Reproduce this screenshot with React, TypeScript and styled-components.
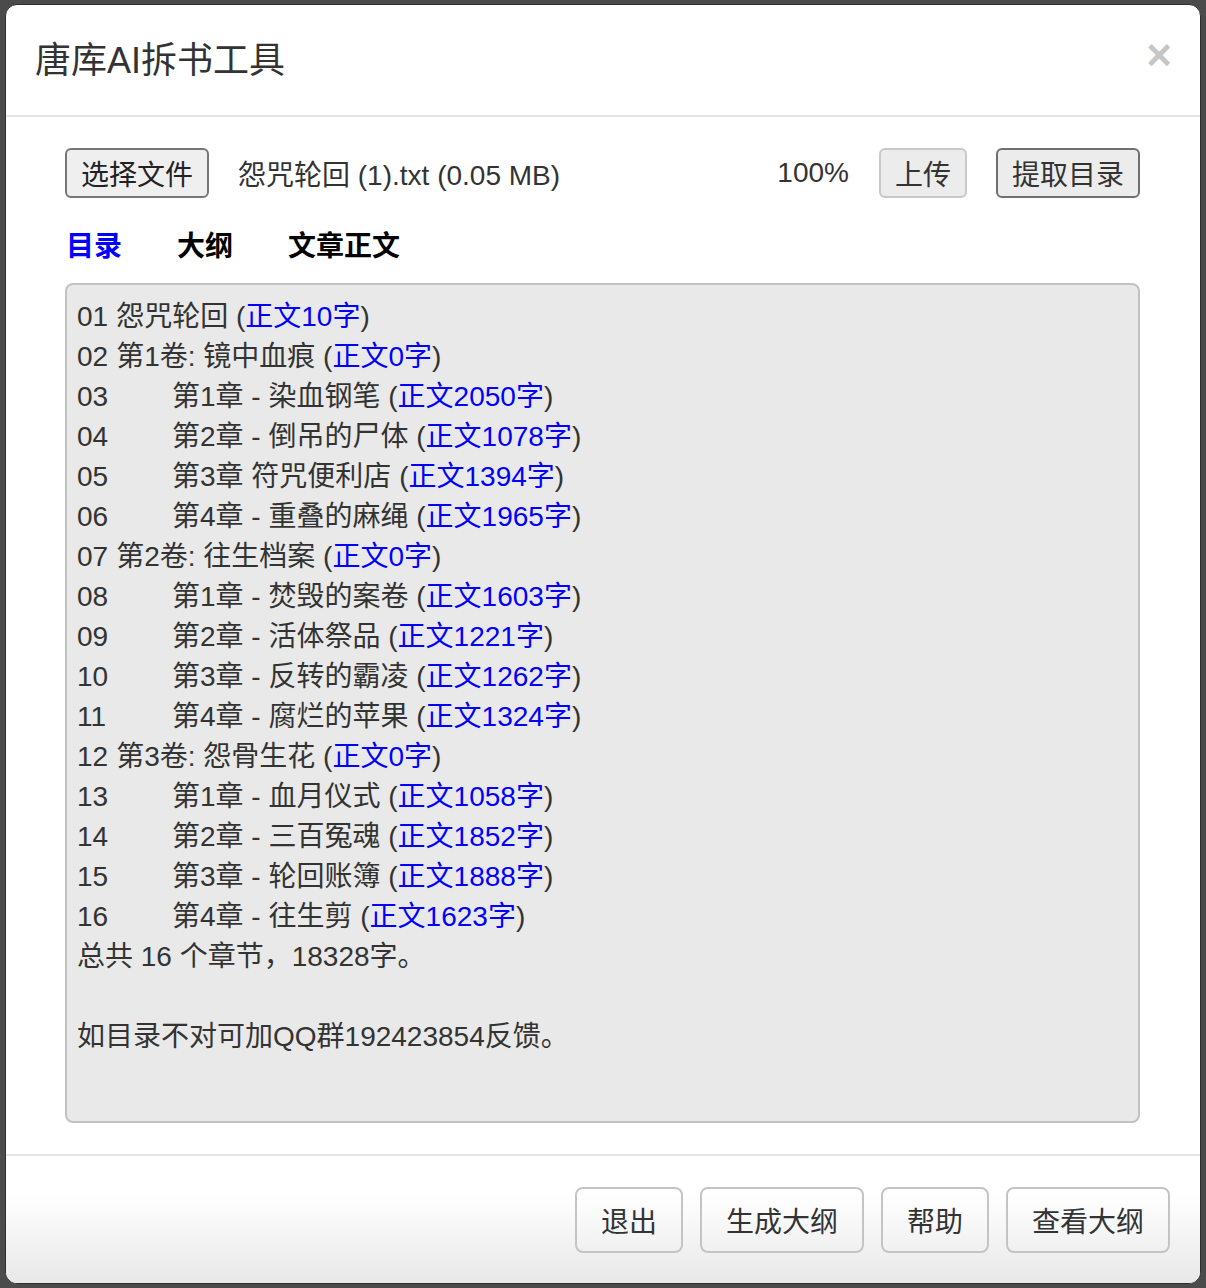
import React from "react";
import styled, { createGlobalStyle } from "styled-components";

const GlobalStyle = createGlobalStyle`
  html, body {
    margin: 0;
    padding: 0;
    background: #4b4b4b;
  }
  body {
    font-family: "Liberation Sans", "Noto Sans CJK SC", sans-serif;
    color: #333;
  }
  * {
    box-sizing: border-box;
  }
`;

type Entry = { no: string; title: string; count: number; indent?: boolean };

const entries: Entry[] = [
  { no: "01", title: "怨咒轮回", count: 10 },
  { no: "02", title: "第1卷: 镜中血痕", count: 0 },
  { no: "03", title: "第1章 - 染血钢笔", count: 2050, indent: true },
  { no: "04", title: "第2章 - 倒吊的尸体", count: 1078, indent: true },
  { no: "05", title: "第3章 符咒便利店", count: 1394, indent: true },
  { no: "06", title: "第4章 - 重叠的麻绳", count: 1965, indent: true },
  { no: "07", title: "第2卷: 往生档案", count: 0 },
  { no: "08", title: "第1章 - 焚毁的案卷", count: 1603, indent: true },
  { no: "09", title: "第2章 - 活体祭品", count: 1221, indent: true },
  { no: "10", title: "第3章 - 反转的霸凌", count: 1262, indent: true },
  { no: "11", title: "第4章 - 腐烂的苹果", count: 1324, indent: true },
  { no: "12", title: "第3卷: 怨骨生花", count: 0 },
  { no: "13", title: "第1章 - 血月仪式", count: 1058, indent: true },
  { no: "14", title: "第2章 - 三百冤魂", count: 1852, indent: true },
  { no: "15", title: "第3章 - 轮回账簿", count: 1888, indent: true },
  { no: "16", title: "第4章 - 往生剪", count: 1623, indent: true },
];

const tabs = [
  { label: "目录", active: true },
  { label: "大纲", active: false },
  { label: "文章正文", active: false },
];

const footerButtons = ["退出", "生成大纲", "帮助", "查看大纲"];

const App = (): JSX.Element => {
  return (
    <>
      <GlobalStyle />
      <Backdrop>
        <Modal>
          <Header>
            <Title>唐库AI拆书工具</Title>
            <Close type="button" aria-label="Close">
              ×
            </Close>
          </Header>
          <Body>
            <UploadRow>
              <FileButton type="button">选择文件</FileButton>
              <FileName>怨咒轮回 (1).txt (0.05 MB)</FileName>
              <Percent>100%</Percent>
              <ActionButton type="button" $muted>
                上传
              </ActionButton>
              <ActionButton type="button">提取目录</ActionButton>
            </UploadRow>
            <Tabs>
              {tabs.map((t) => (
                <Tab key={t.label} $active={t.active}>
                  {t.label}
                </Tab>
              ))}
            </Tabs>
            <Catalog>
              {entries.map((e) => (
                <Line key={e.no}>
                  <Num $indent={e.indent}>{e.no}</Num>
                  {e.title} (<Count>正文{e.count}字</Count>)
                </Line>
              ))}
              <Line>总共 16 个章节，18328字。</Line>
              <Line>&nbsp;</Line>
              <Line>如目录不对可加QQ群192423854反馈。</Line>
            </Catalog>
          </Body>
          <Footer>
            {footerButtons.map((label) => (
              <FooterButton key={label} type="button">
                {label}
              </FooterButton>
            ))}
          </Footer>
        </Modal>
      </Backdrop>
    </>
  );
};

const Backdrop = styled.div`
  padding: 4px 5px;
  min-height: 1288px;
`;

const Modal = styled.div`
  background: #fff;
  border: 1px solid #2e2e2e;
  border-radius: 12px;
  overflow: hidden;
  display: flex;
  flex-direction: column;
  height: 1280px;
`;

const Header = styled.div`
  display: flex;
  align-items: center;
  justify-content: space-between;
  padding: 31px 30px 29px 29px;
  border-bottom: 2px solid #e5e5e5;
`;

const Title = styled.h4`
  margin: 0;
  font-size: 36px;
  line-height: 50px;
  font-weight: 400;
  color: #333;
`;

const Close = styled.button`
  border: 0;
  background: transparent;
  padding: 0;
  margin: -12px -2px 0 0;
  font-family: "Liberation Sans", sans-serif;
  font-size: 44px;
  line-height: 1;
  font-weight: 700;
  color: #000;
  opacity: 0.22;
  cursor: pointer;
`;

const Body = styled.div`
  flex: 1;
  padding: 31px 60px 31px 59px;
  display: flex;
  flex-direction: column;
`;

const UploadRow = styled.div`
  display: flex;
  align-items: center;
  gap: 29px;
  height: 50px;
  margin-bottom: 20px;
`;

const FileButton = styled.button`
  height: 50px;
  padding: 0 14px;
  font-family: inherit;
  font-size: 28px;
  color: #222;
  background: #efefef;
  border: 2px solid #767676;
  border-radius: 6px;
`;

const FileName = styled.span`
  flex: 1;
  font-size: 28px;
  color: #333;
`;

const Percent = styled.span`
  font-size: 28px;
  color: #333;
  margin-right: 1px;
`;

const ActionButton = styled.button<{ $muted?: boolean }>`
  height: 50px;
  padding: 0 14px;
  font-family: inherit;
  font-size: 28px;
  color: #333;
  background: #ececec;
  border: 2px solid ${({ $muted }) => ($muted ? "#c9c9c9" : "#6f6f6f")};
  border-radius: 6px;
`;

const Tabs = styled.div`
  display: flex;
  gap: 55px;
  height: 52px;
  align-items: center;
  margin-bottom: 13px;
  padding-left: 1px;
`;

const Tab = styled.span<{ $active?: boolean }>`
  font-size: 28px;
  font-weight: 700;
  color: ${({ $active }) => ($active ? "#0000ff" : "#000")};
  cursor: pointer;
`;

const Catalog = styled.div`
  flex: 1;
  background: #e9e9e9;
  border: 2px solid #c2c2c2;
  border-radius: 8px;
  padding: 12px 10px 10px;
`;

const Line = styled.div`
  font-size: 28px;
  line-height: 40px;
  color: #333;
  white-space: nowrap;
`;

const Num = styled.span<{ $indent?: boolean }>`
  display: inline-block;
  width: ${({ $indent }) => ($indent ? "95px" : "auto")};
  margin-right: ${({ $indent }) => ($indent ? "0" : "8px")};
`;

const Count = styled.span`
  color: #0000ff;
`;

const Footer = styled.div`
  display: flex;
  justify-content: flex-end;
  gap: 17px;
  padding: 31px 30px 30px;
  border-top: 2px solid #e5e5e5;
  background: linear-gradient(to bottom, #fff 30%, #e8e8e8 100%);
`;

const FooterButton = styled.button`
  height: 66px;
  padding: 0 24px;
  font-family: inherit;
  font-size: 28px;
  color: #333;
  background: transparent;
  border: 2px solid #c4c4c4;
  border-radius: 8px;
  cursor: pointer;
`;

export default App;
